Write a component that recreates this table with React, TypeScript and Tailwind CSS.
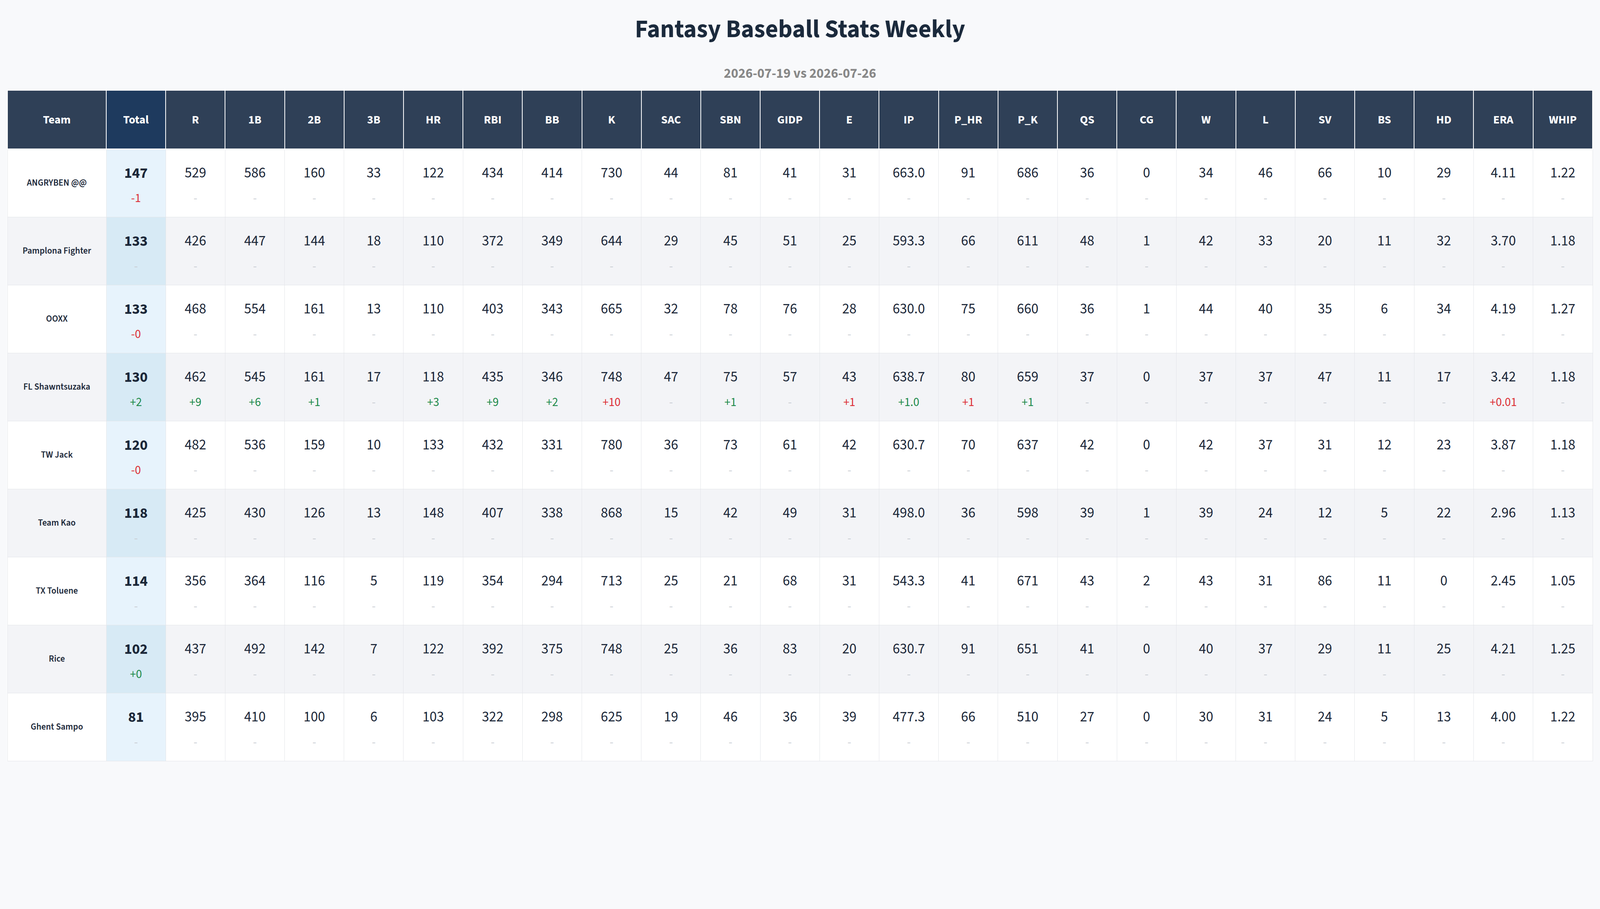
const COLUMNS = [
  "R", "1B", "2B", "3B", "HR", "RBI", "BB", "K", "SAC", "SBN", "GIDP", "E",
  "IP", "P_HR", "P_K", "QS", "CG", "W", "L", "SV", "BS", "HD", "ERA", "WHIP",
];

type Tone = "up" | "down";
type Delta = [string, Tone];

type TeamRow = {
  team: string;
  total: string;
  totalDelta?: Delta;
  values: string[];
  deltas?: Record<string, Delta>;
};

const ROWS: TeamRow[] = [
  {
    team: "ANGRYBEN @@",
    total: "147",
    totalDelta: ["-1", "down"],
    values: ["529", "586", "160", "33", "122", "434", "414", "730", "44", "81", "41", "31", "663.0", "91", "686", "36", "0", "34", "46", "66", "10", "29", "4.11", "1.22"],
  },
  {
    team: "Pamplona Fighter",
    total: "133",
    values: ["426", "447", "144", "18", "110", "372", "349", "644", "29", "45", "51", "25", "593.3", "66", "611", "48", "1", "42", "33", "20", "11", "32", "3.70", "1.18"],
  },
  {
    team: "OOXX",
    total: "133",
    totalDelta: ["-0", "down"],
    values: ["468", "554", "161", "13", "110", "403", "343", "665", "32", "78", "76", "28", "630.0", "75", "660", "36", "1", "44", "40", "35", "6", "34", "4.19", "1.27"],
  },
  {
    team: "FL Shawntsuzaka",
    total: "130",
    totalDelta: ["+2", "up"],
    values: ["462", "545", "161", "17", "118", "435", "346", "748", "47", "75", "57", "43", "638.7", "80", "659", "37", "0", "37", "37", "47", "11", "17", "3.42", "1.18"],
    deltas: {
      R: ["+9", "up"],
      "1B": ["+6", "up"],
      "2B": ["+1", "up"],
      HR: ["+3", "up"],
      RBI: ["+9", "up"],
      BB: ["+2", "up"],
      K: ["+10", "down"],
      SBN: ["+1", "up"],
      E: ["+1", "down"],
      IP: ["+1.0", "up"],
      P_HR: ["+1", "down"],
      P_K: ["+1", "up"],
      ERA: ["+0.01", "down"],
    },
  },
  {
    team: "TW Jack",
    total: "120",
    totalDelta: ["-0", "down"],
    values: ["482", "536", "159", "10", "133", "432", "331", "780", "36", "73", "61", "42", "630.7", "70", "637", "42", "0", "42", "37", "31", "12", "23", "3.87", "1.18"],
  },
  {
    team: "Team Kao",
    total: "118",
    values: ["425", "430", "126", "13", "148", "407", "338", "868", "15", "42", "49", "31", "498.0", "36", "598", "39", "1", "39", "24", "12", "5", "22", "2.96", "1.13"],
  },
  {
    team: "TX Toluene",
    total: "114",
    values: ["356", "364", "116", "5", "119", "354", "294", "713", "25", "21", "68", "31", "543.3", "41", "671", "43", "2", "43", "31", "86", "11", "0", "2.45", "1.05"],
  },
  {
    team: "Rice",
    total: "102",
    totalDelta: ["+0", "up"],
    values: ["437", "492", "142", "7", "122", "392", "375", "748", "25", "36", "83", "20", "630.7", "91", "651", "41", "0", "40", "37", "29", "11", "25", "4.21", "1.25"],
  },
  {
    team: "Ghent Sampo",
    total: "81",
    values: ["395", "410", "100", "6", "103", "322", "298", "625", "19", "46", "36", "39", "477.3", "66", "510", "27", "0", "30", "31", "24", "5", "13", "4.00", "1.22"],
  },
];

function DeltaLine({ delta }: { delta?: Delta }) {
  if (!delta) {
    return <div className="mt-[13px] text-[31px] leading-[46px] text-[#c9cdd3]">-</div>;
  }
  const [text, tone] = delta;
  return (
    <div
      className={
        tone === "up"
          ? "mt-[13px] text-[31px] leading-[46px] text-[#1e8a4a]"
          : "mt-[13px] text-[31px] leading-[46px] text-[#dc2f36]"
      }
    >
      {text}
    </div>
  );
}

export default function App() {
  return (
    <div
      className="min-h-screen bg-[#f8f9fb] px-[18px] pt-[37px] text-[#1b2738]"
      style={{ fontFamily: '"Source Sans 3", "Source Sans Pro", Lato, "Liberation Sans", sans-serif' }}
    >
      <h1 className="text-center text-[64px] font-bold leading-[76px] text-[#1b2a3c]">
        Fantasy Baseball Stats Weekly
      </h1>
      <p className="mt-[53px] text-center text-[35px] font-bold leading-[44px] text-[#888888]">
        2026-07-19 vs 2026-07-26
      </p>

      {/* stats table */}
      <div className="mt-[20px] overflow-hidden bg-white">
        <table className="w-full table-fixed border-collapse">
          <colgroup>
            <col className="w-[253px]" />
            <col />
            {COLUMNS.map((c) => (
              <col key={c} />
            ))}
          </colgroup>
          <thead>
            <tr>
              <th className="h-[150px] border-2 border-white bg-[#2f4057] text-[30px] font-bold text-white">
                Team
              </th>
              <th className="border-2 border-white bg-[#1e3a5e] text-[30px] font-bold text-white">
                Total
              </th>
              {COLUMNS.map((c) => (
                <th
                  key={c}
                  className="border-2 border-white bg-[#2f4057] text-[30px] font-bold text-white"
                >
                  {c}
                </th>
              ))}
            </tr>
          </thead>
          <tbody>
            {ROWS.map((row, i) => {
              const striped = i % 2 === 1;
              return (
                <tr key={row.team} className={striped ? "bg-[#f3f4f7]" : "bg-white"}>
                  <td className="h-[174px] border border-[#e3e5e9] text-center text-[23px] font-semibold text-[#1b2738]">
                    {row.team}
                  </td>
                  <td
                    className={
                      striped
                        ? "border border-[#e3e5e9] bg-[#d7eaf5] pt-[33px] text-center align-top"
                        : "border border-[#e3e5e9] bg-[#e7f3fc] pt-[33px] text-center align-top"
                    }
                  >
                    <div className="text-[38px] font-bold leading-[56px]">{row.total}</div>
                    <DeltaLine delta={row.totalDelta} />
                  </td>
                  {COLUMNS.map((c, j) => (
                    <td
                      key={c}
                      className="border border-[#e3e5e9] pt-[33px] text-center align-top"
                    >
                      <div className="text-[37px] leading-[56px]">{row.values[j]}</div>
                      <DeltaLine delta={row.deltas?.[c]} />
                    </td>
                  ))}
                </tr>
              );
            })}
          </tbody>
        </table>
      </div>
    </div>
  );
}
